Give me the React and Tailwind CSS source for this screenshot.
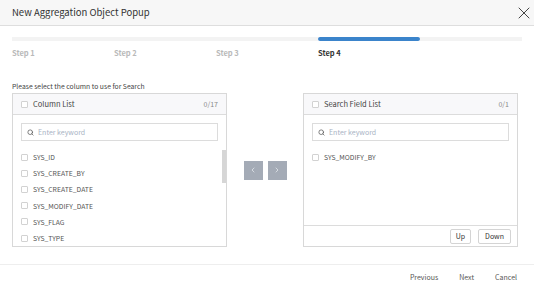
import { X, Search, ChevronLeft, ChevronRight } from 'lucide-react'

const columns = [
  'SYS_ID',
  'SYS_CREATE_BY',
  'SYS_CREATE_DATE',
  'SYS_MODIFY_DATE',
  'SYS_FLAG',
  'SYS_TYPE',
]

const steps = ['Step 1', 'Step 2', 'Step 3', 'Step 4', '']

function Check() {
  return <span className="w-[7px] h-[7px] rounded-[1px] border border-[#d2d2d2] bg-white shrink-0" />
}

function SearchBox() {
  return (
    <div className="mx-2 mt-2 h-[18px] border border-[#dcdcdc] flex items-center gap-[4px] px-[5px]">
      <Search size={7} strokeWidth={2.5} className="text-[#555]" />
      <span className="text-[7px] text-[#a9b3c4]">Enter keyword</span>
    </div>
  )
}

function Row({ name }) {
  return (
    <div className="h-[16.2px] shrink-0 flex items-center gap-[5px] pl-[8px]">
      <Check />
      <span className="text-[6.8px] text-[#555]">{name}</span>
    </div>
  )
}

function PanelHead({ title, count }) {
  return (
    <div className="h-[21px] bg-[#f8f8fa] border-b border-[#dcdcdc] flex items-center gap-[5px] pl-[8px] pr-[8px]">
      <Check />
      <span className="text-[7.5px] text-[#444] flex-1">{title}</span>
      <span className="text-[7px] text-[#888]">{count}</span>
    </div>
  )
}

export default function App() {
  return (
    <div
      className="w-[534px] h-[289px] bg-white flex flex-col overflow-hidden"
      style={{ fontFamily: '"Noto Sans CJK KR", "Noto Sans", sans-serif' }}
    >
      {/* Title bar */}
      <header className="h-[26px] shrink-0 bg-[#f7f7f7] border-b border-[#dedede] flex items-center justify-between pl-3 pr-0">
        <span className="text-[9.5px] text-[#333]">New Aggregation Object Popup</span>
        <X size={20} strokeWidth={1.1} className="text-[#333]" />
      </header>

      {/* Steps */}
      <div className="ml-3 mt-[11px] w-[510px] grid grid-cols-5">
        {steps.map((s, i) => (
          <div key={i} className="flex flex-col">
            <div className={i === 3 ? 'h-[4px] rounded-full bg-[#3b84cb]' : 'h-[4px] bg-[#f3f3f3]'} />
            <span
              className={
                i === 3
                  ? 'mt-[7px] text-[7.5px] font-bold text-[#333] leading-[10px] h-[10px]'
                  : 'mt-[7px] text-[7.5px] font-bold text-[#b9b9b9] leading-[10px] h-[10px]'
              }
            >
              {s}
            </span>
          </div>
        ))}
      </div>

      {/* Body */}
      <div className="ml-3 mt-[24px] text-[6.8px] text-[#444] leading-[8px]">
        Please select the column to use for Search
      </div>

      <div className="ml-3 mt-[3px] flex items-stretch">
        {/* Column list */}
        <div className="w-[215px] h-[154px] border border-[#d8d8d8] flex flex-col">
          <PanelHead title="Column List" count="0/17" />
          <SearchBox />
          <div className="mt-2 flex-1 min-h-0 flex">
            <div className="flex-1 flex flex-col overflow-hidden">
              {columns.map(c => (
                <Row key={c} name={c} />
              ))}
            </div>
            <div className="w-[4px] flex flex-col">
              <div className="mt-[1px] h-[33px] bg-[#d6d6d6]" />
            </div>
          </div>
        </div>

        {/* Move buttons */}
        <div className="w-[76px] flex items-center justify-center gap-[5px]">
          <button className="w-[19px] h-[19px] bg-[#a4abb6] flex items-center justify-center">
            <ChevronLeft size={8} strokeWidth={2.5} className="text-[#dfe3e8]" />
          </button>
          <button className="w-[19px] h-[19px] bg-[#a4abb6] flex items-center justify-center">
            <ChevronRight size={8} strokeWidth={2.5} className="text-[#dfe3e8]" />
          </button>
        </div>

        {/* Search field list */}
        <div className="w-[215px] h-[154px] border border-[#d8d8d8] flex flex-col">
          <PanelHead title="Search Field List" count="0/1" />
          <SearchBox />
          <div className="mt-2 flex-1 flex flex-col">
            <Row name="SYS_MODIFY_BY" />
          </div>
          <div className="h-[21px] border-t border-[#dcdcdc] flex items-center justify-end gap-[7px] pr-[6px]">
            <button className="h-[15px] px-[5px] border border-[#d4d4d4] rounded-[2px] text-[7px] text-[#333]">Up</button>
            <button className="h-[15px] px-[6px] border border-[#d4d4d4] rounded-[2px] text-[7px] text-[#333]">Down</button>
          </div>
        </div>
      </div>

      {/* Footer */}
      <footer className="mt-auto h-[25px] border-t border-[#eeeeee] flex items-center justify-end gap-[21px] pr-[17px]">
        <span className="text-[7px] text-[#555]">Previous</span>
        <span className="text-[7px] text-[#555]">Next</span>
        <span className="text-[7px] text-[#555]">Cancel</span>
      </footer>
    </div>
  )
}
